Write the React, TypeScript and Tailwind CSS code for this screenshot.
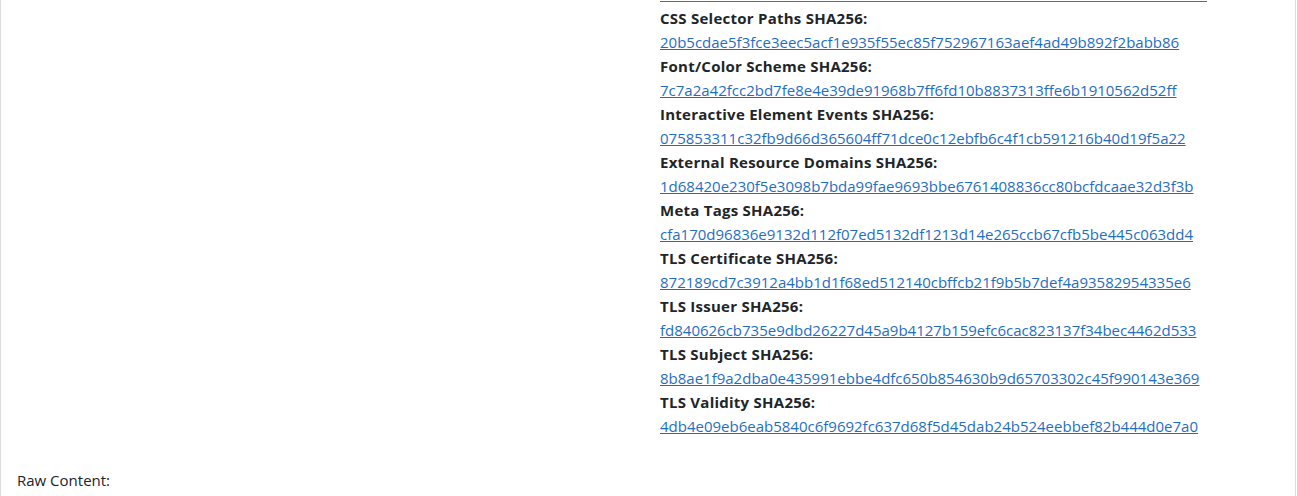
import React from "react";

const items: [string, string][] = [
  ["CSS Selector Paths SHA256:", "20b5cdae5f3fce3eec5acf1e935f55ec85f752967163aef4ad49b892f2babb86"],
  ["Font/Color Scheme SHA256:", "7c7a2a42fcc2bd7fe8e4e39de91968b7ff6fd10b8837313ffe6b1910562d52ff"],
  ["Interactive Element Events SHA256:", "075853311c32fb9d66d365604ff71dce0c12ebfb6c4f1cb591216b40d19f5a22"],
  ["External Resource Domains SHA256:", "1d68420e230f5e3098b7bda99fae9693bbe6761408836cc80bcfdcaae32d3f3b"],
  ["Meta Tags SHA256:", "cfa170d96836e9132d112f07ed5132df1213d14e265ccb67cfb5be445c063dd4"],
  ["TLS Certificate SHA256:", "872189cd7c3912a4bb1d1f68ed512140cbffcb21f9b5b7def4a93582954335e6"],
  ["TLS Issuer SHA256:", "fd840626cb735e9dbd26227d45a9b4127b159efc6cac823137f34bec4462d533"],
  ["TLS Subject SHA256:", "8b8ae1f9a2dba0e435991ebbe4dfc650b854630b9d65703302c45f990143e369"],
  ["TLS Validity SHA256:", "4db4e09eb6eab5840c6f9692fc637d68f5d45dab24b524eebbef82b444d0e7a0"],
];

export default function App() {
  return (
    <div
      className="w-[1296px] h-[496px] overflow-hidden bg-white border-l border-r border-[#dcdcdc] text-[#212529] text-[15px] leading-[24px]"
      style={{ fontFamily: '"Open Sans", "Noto Sans", sans-serif' }}
    >
      <div className="px-4 pt-[6px]">
        <div className="grid grid-cols-2 gap-6">
          <div />
          <div className="relative">
            <div className="absolute left-0 top-[-5px] w-[547px] h-px bg-[#2b78c2]" />
            {items.map(([label, hash]) => (
              <div key={label}>
                <div className="font-bold tracking-[0.25px]">{label}</div>
                <div>
                  <a href="#" className="text-[#1f6ec2] underline">
                    {hash}
                  </a>
                </div>
              </div>
            ))}
          </div>
        </div>
        <div className="mt-[30px]">Raw Content:</div>
      </div>
    </div>
  );
}
